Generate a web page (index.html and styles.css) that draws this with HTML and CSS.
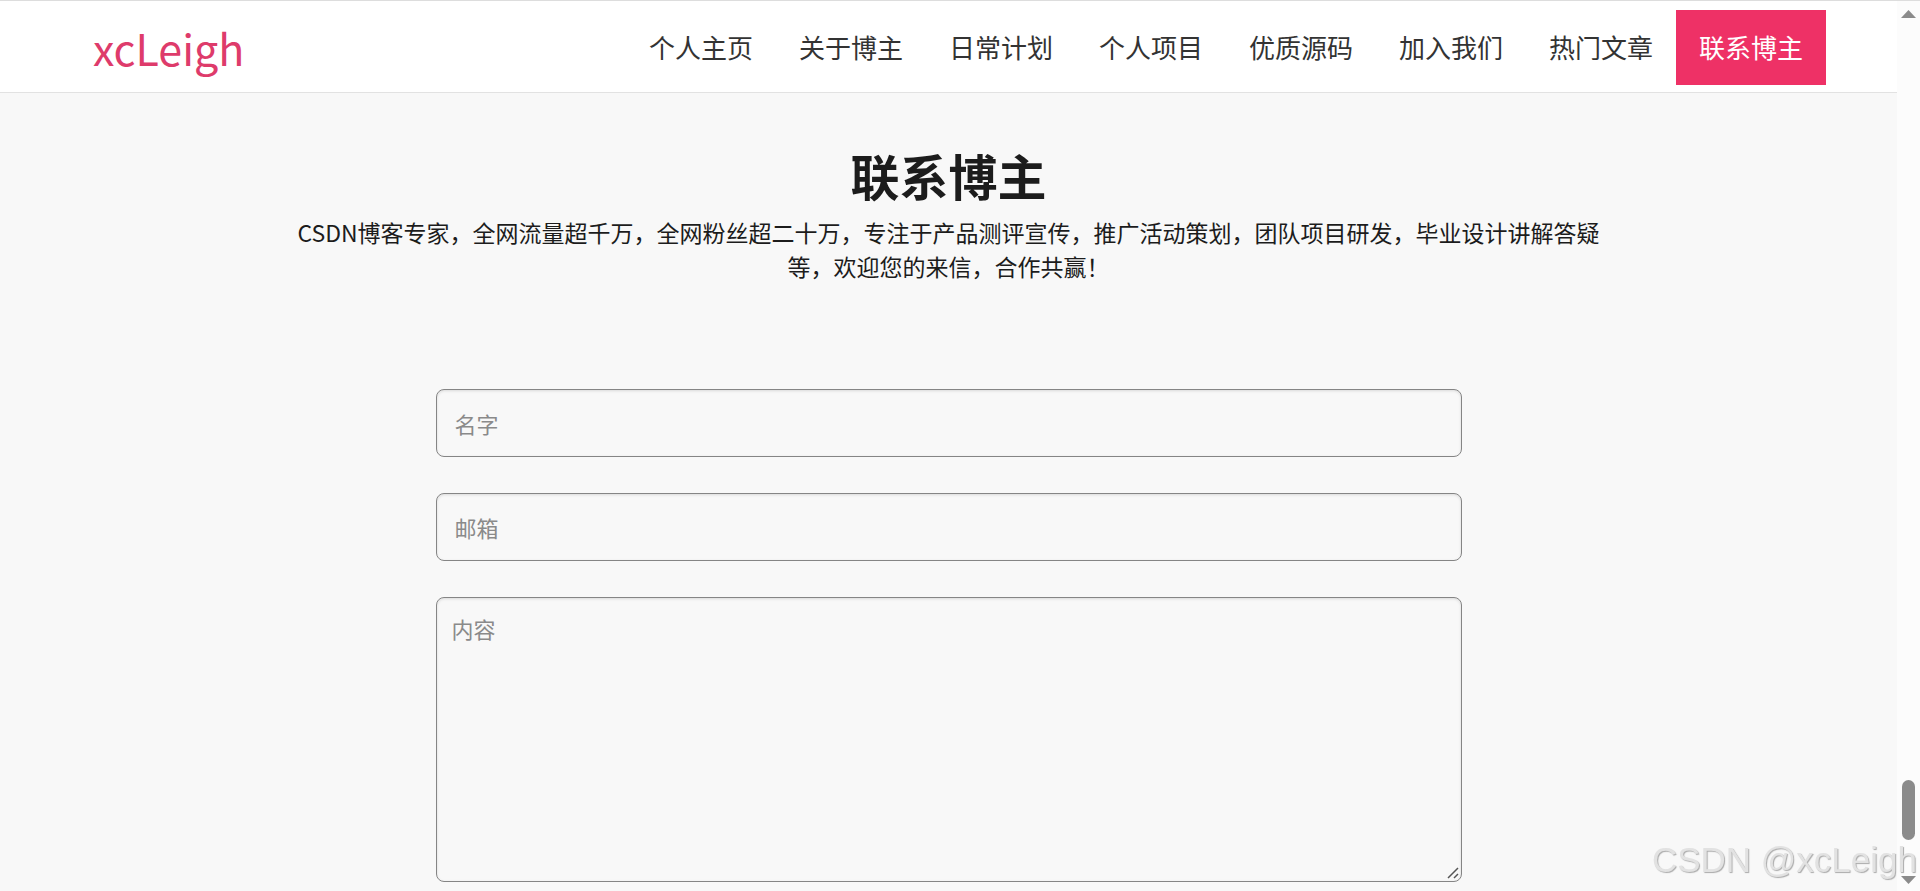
FILE: index.html
```html
<!DOCTYPE html>
<html lang="zh-CN">
<head>
    <meta charset="UTF-8">
    <meta name="viewport" content="width=device-width, initial-scale=1.0">
    <title>xcLeigh</title>
    <link rel="stylesheet" href="styles.css">
</head>
<body>
    <header class="header">
        <a class="logo" href="#">xcLeigh</a>
        <nav class="nav">
            <a href="#home">个人主页</a>
            <a href="#about">关于博主</a>
            <a href="#plan">日常计划</a>
            <a href="#project">个人项目</a>
            <a href="#source">优质源码</a>
            <a href="#join">加入我们</a>
            <a href="#article">热门文章</a>
            <a href="#contact" class="active">联系博主</a>
        </nav>
    </header>

    <main class="contact" id="contact">
        <h2>联系博主</h2>
        <p class="intro">CSDN博客专家，全网流量超千万，全网粉丝超二十万，专注于产品测评宣传，推广活动策划，团队项目研发，毕业设计讲解答疑等，欢迎您的来信，合作共赢！</p>
        <form class="contact-form">
            <input type="text" name="name" placeholder="名字" aria-label="名字">
            <input type="email" name="email" placeholder="邮箱" aria-label="邮箱">
            <textarea name="content" placeholder="内容" aria-label="内容"></textarea>
        </form>
    </main>

    <!-- page scrollbar -->
    <div class="scrollbar">
        <svg width="15" height="8" viewBox="0 0 15 8"><path d="M7.5 0 15 8H0z"/></svg>
        <div class="track"><div class="thumb"></div></div>
        <svg width="15" height="8" viewBox="0 0 15 8"><path d="M0 0h15L7.5 8z"/></svg>
    </div>
    <div class="watermark">CSDN @xcLeigh</div>
</body>
</html>
```
FILE: styles.css
```css
* {
    box-sizing: border-box;
}

body {
    margin: 0;
    padding-right: 23px; /* room for the scrollbar */
    background-color: #f8f8f8;
    color: #1c1c1c;
    font-family: "Noto Sans CJK SC", sans-serif;
}

.header {
    display: flex;
    justify-content: space-between;
    align-items: center;
    min-height: 93px;
    padding: 8px 71px 6px 93px;
    background-color: #fff;
    border-top: 1px solid #ddd;
    border-bottom: 1px solid #e2e2e2;
}

.logo {
    padding-bottom: 2px;
    color: #de3b6b;
    font-size: 43px;
    line-height: 60px;
    text-decoration: none;
}

.nav {
    display: flex;
}

.nav a {
    padding: 0 23px 2px;
    color: #333;
    font-size: 26px;
    line-height: 73px;
    text-decoration: none;
}

.nav a.active {
    background-color: #ee3166;
    color: #fff;
}

.contact {
    padding: 46px 0 10px;
}

.contact h2 {
    margin: 0;
    font-size: 49px;
    line-height: 72px;
    text-align: center;
}

.intro {
    width: 70%;
    margin: 4px auto 106px;
    font-size: 23px;
    line-height: 34px;
    text-align: center;
}

.contact-form {
    display: flex;
    flex-direction: column;
    gap: 36px;
    width: 90%;
    max-width: 1026px;
    margin: 0 auto;
}

.contact-form input,
.contact-form textarea {
    width: 100%;
    border: 1px solid #858585;
    border-radius: 8px;
    background-color: transparent;
    box-shadow: inset 0 1px 3px rgba(0, 0, 0, 0.12);
    color: #1c1c1c;
    font-family: inherit;
    font-size: 22px;
}

.contact-form input {
    height: 68px;
    padding: 0 18px;
}

.contact-form textarea {
    display: block;
    height: 285px;
    padding: 14px 15px;
    resize: both;
}

.contact-form textarea::-webkit-resizer {
    background: url("data:image/svg+xml,%3Csvg xmlns='http://www.w3.org/2000/svg' width='15' height='15'%3E%3Cpath d='M2 12 12 2M8 12l4-4' stroke='%23555' stroke-width='1.5'/%3E%3C/svg%3E") no-repeat right bottom;
}

.contact-form ::placeholder {
    color: #8a8a8a;
}

.scrollbar {
    position: fixed;
    top: 0;
    right: 0;
    bottom: 0;
    display: flex;
    flex-direction: column;
    align-items: center;
    width: 23px;
    padding: 9px 0 7px;
    background-color: #fcfcfc;
    border-top: 1px solid #ddd;
}

.scrollbar svg {
    fill: #8b8b8b;
}

.track {
    display: flex;
    flex: 1;
    align-items: flex-end;
    padding-bottom: 36px;
}

.thumb {
    width: 13px;
    height: 60px;
    border-radius: 7px;
    background-color: #8b8b8b;
}

.watermark {
    position: fixed;
    right: 3px;
    bottom: 11px;
    color: #e2e2e2;
    font-family: "Liberation Sans", sans-serif;
    font-size: 35px;
    line-height: 40px;
    text-shadow: 1px 1px 1px #aaa;
}
```
